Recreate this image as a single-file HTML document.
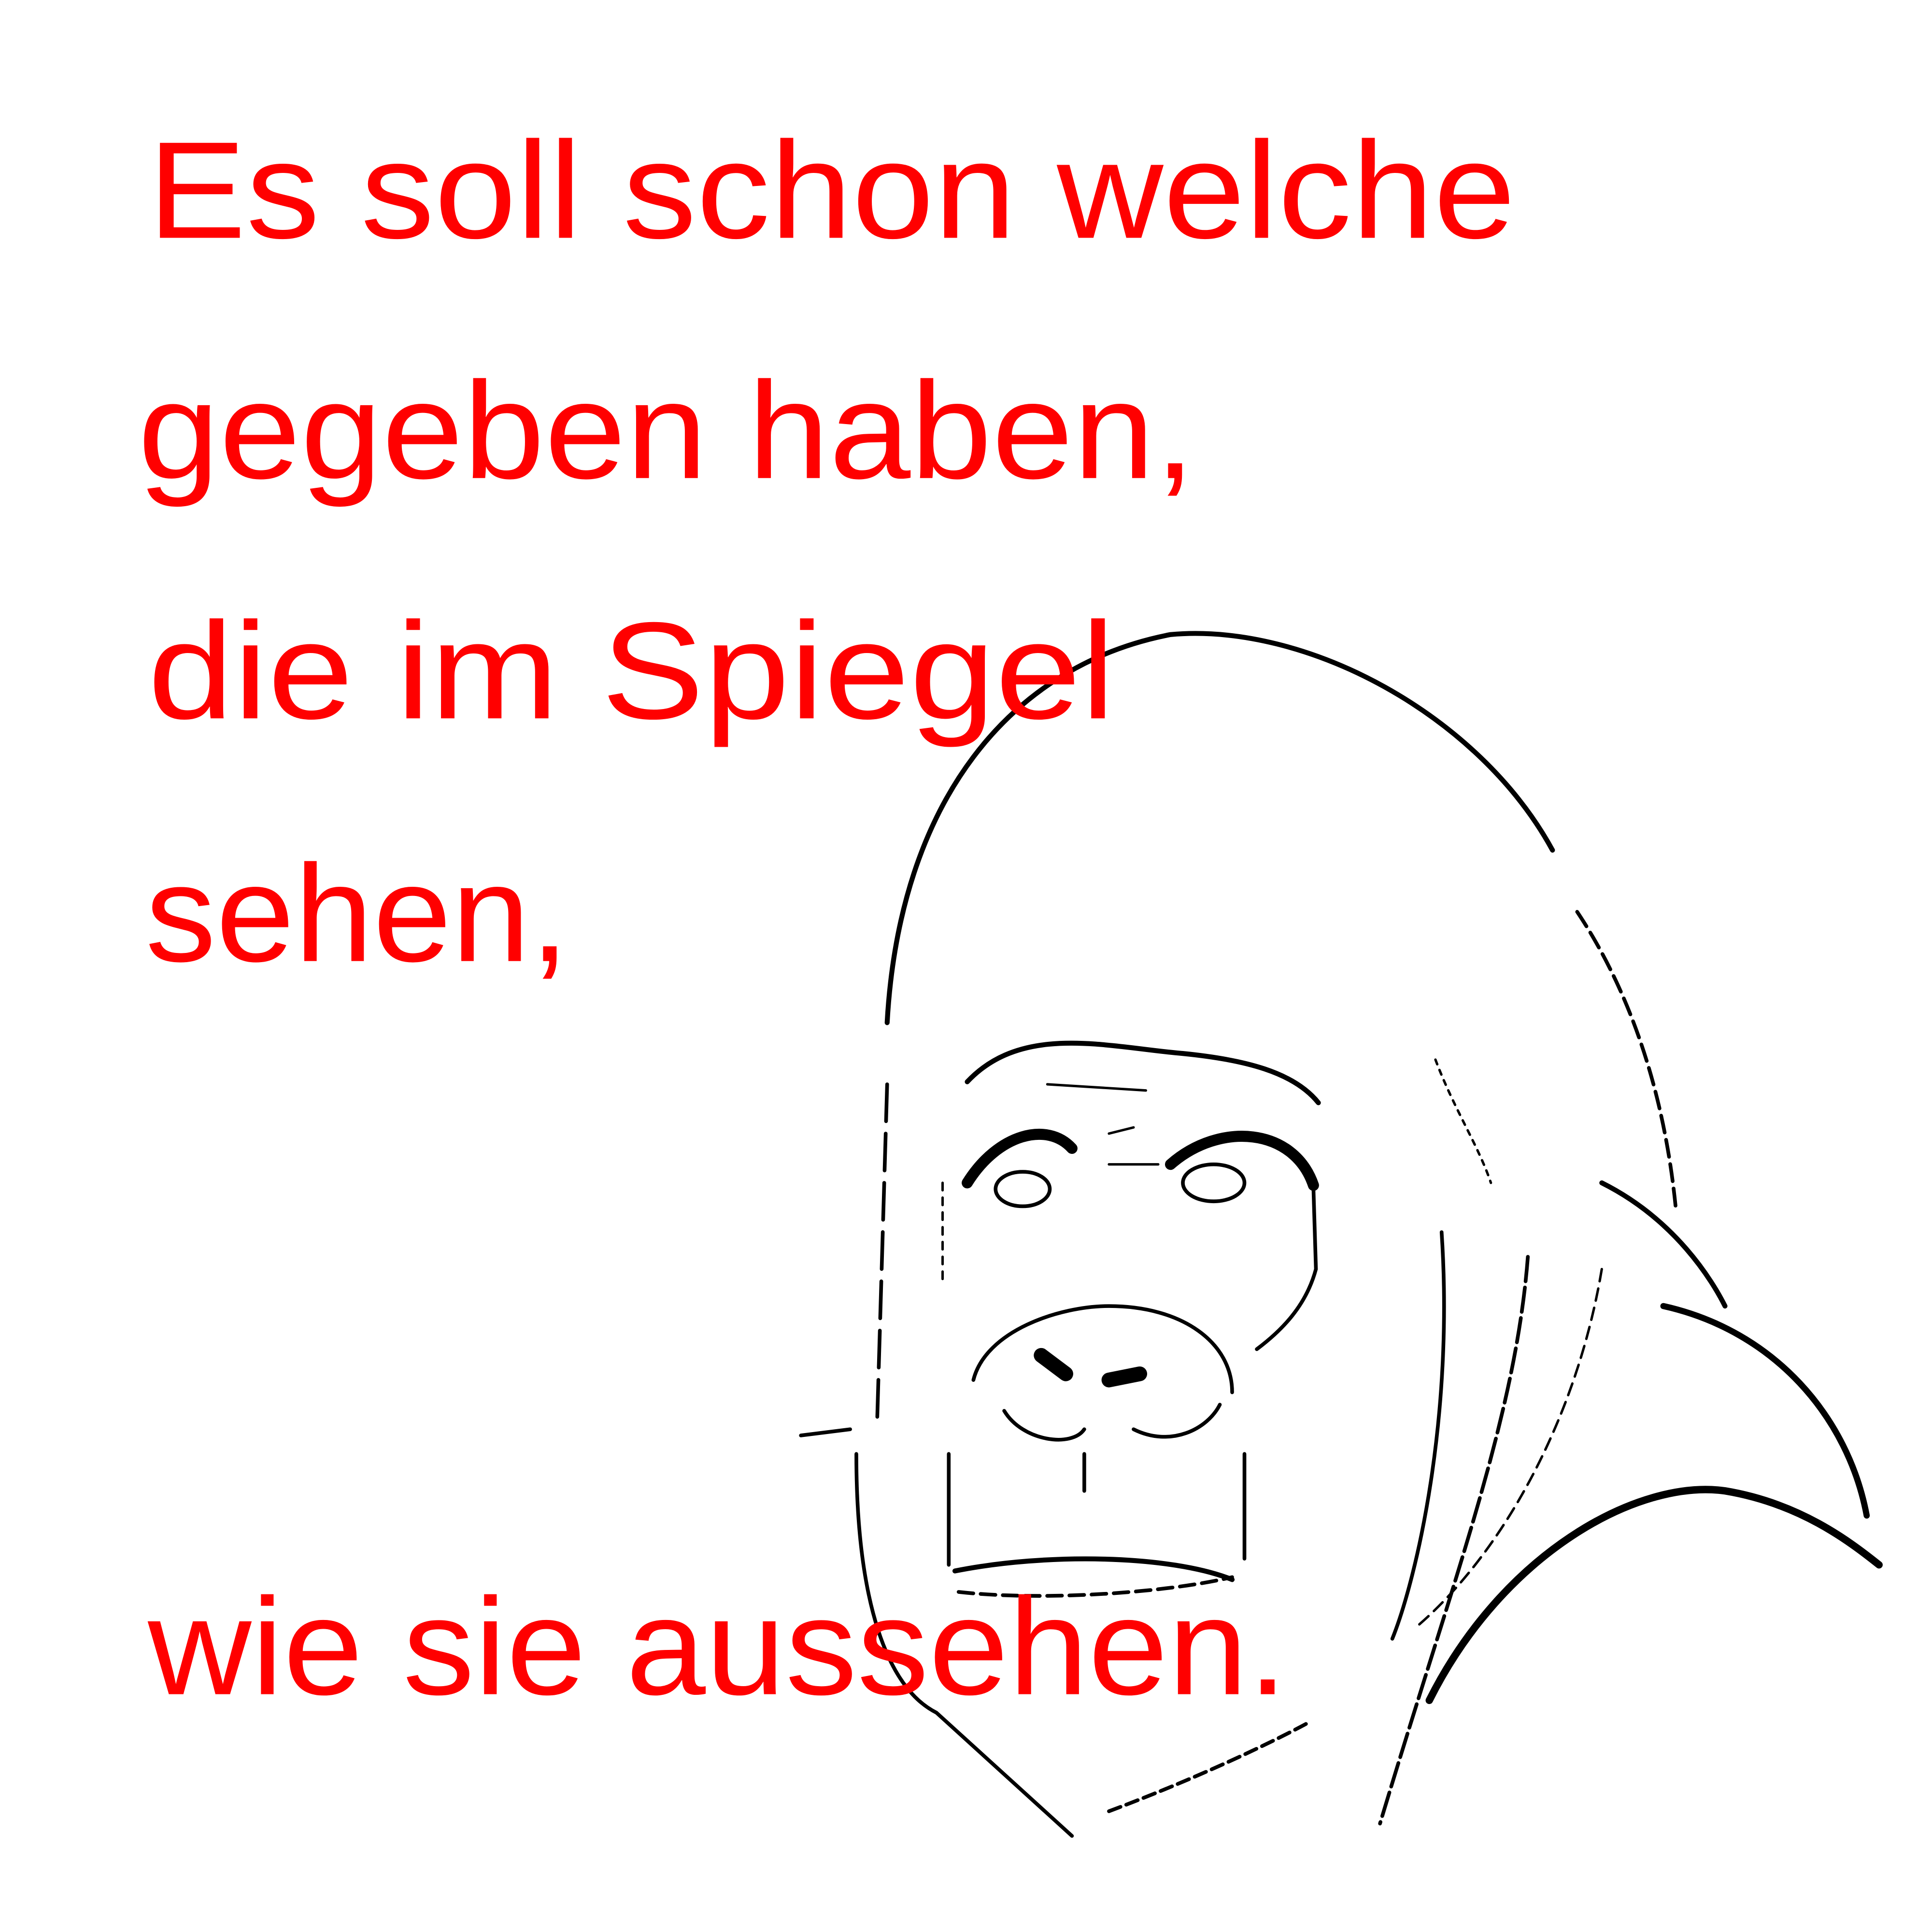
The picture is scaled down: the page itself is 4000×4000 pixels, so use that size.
<!DOCTYPE html>
<html><head><meta charset="utf-8"><style>
html,body{margin:0;padding:0;background:#fff;width:4000px;height:4000px;overflow:hidden}
svg{display:block}
</style></head><body>
<svg width="4000" height="4000" viewBox="0 0 1568 1568" xmlns="http://www.w3.org/2000/svg">
<g fill="none" stroke="#000" stroke-linecap="round">
<path d="M720,830 C730,650 820,540 950,515 C1060,505 1200,580 1260,690" stroke-width="4"/>
<path d="M1280,740 C1320,800 1350,880 1360,980" stroke-width="3" stroke-dasharray="14 6"/>
<path d="M785,878 C830,830 900,850 960,855 C1010,860 1050,870 1070,895" stroke-width="4"/>
<path d="M720,880 L712,1150" stroke-width="3" stroke-dasharray="30 10"/>
<path d="M695,1180 C695,1300 720,1370 760,1390 L870,1490" stroke-width="3"/>
<path d="M900,1470 C980,1440 1040,1410 1062,1398" stroke-width="3" stroke-dasharray="10 5"/>
<path d="M785,960 C810,920 850,910 870,932" stroke-width="9"/>
<path d="M950,945 C990,910 1050,915 1066,962" stroke-width="9"/>
<ellipse cx="830" cy="965" rx="22" ry="14" stroke-width="3"/>
<ellipse cx="985" cy="960" rx="25" ry="15" stroke-width="3"/>
<path d="M1066,965 L1068,1030 C1060,1060 1040,1080 1020,1095" stroke-width="3"/>
<path d="M765,960 L765,1040" stroke-width="2" stroke-dasharray="6 6"/>
<path d="M790,1120 C800,1080 860,1060 900,1060 C960,1060 1000,1090 1000,1130" stroke-width="3"/>
<path d="M845,1100 l20,15 M900,1120 l25,-5" stroke-width="12"/>
<path d="M815,1145 C830,1170 870,1175 880,1160 M920,1160 C950,1175 980,1160 990,1140" stroke-width="3"/>
<path d="M880,1180 L880,1210" stroke-width="3"/>
<path d="M770,1180 L770,1270 M1010,1180 L1010,1265" stroke-width="3"/>
<path d="M775,1275 C850,1260 950,1262 1000,1282" stroke-width="4"/>
<path d="M778,1292 C850,1300 950,1292 1000,1280" stroke-width="3" stroke-dasharray="12 6"/>
<path d="M650,1165 L690,1160" stroke-width="3"/>
<path d="M1300,960 C1360,990 1390,1040 1400,1060" stroke-width="4"/>
<path d="M1350,1060 C1440,1080 1500,1150 1515,1230" stroke-width="5"/>
<path d="M1160,1380 C1220,1260 1330,1200 1400,1210 C1460,1220 1500,1250 1525,1270" stroke-width="6"/>
<path d="M1170,1000 C1180,1150 1150,1280 1130,1330" stroke-width="3"/>
<path d="M1240,1020 C1230,1150 1180,1280 1120,1480" stroke-width="3" stroke-dasharray="20 5"/>
<path d="M1300,1030 C1280,1150 1220,1260 1150,1320" stroke-width="2" stroke-dasharray="10 6"/>
<path d="M1165,860 C1180,900 1200,930 1210,960" stroke-width="2" stroke-dasharray="4 5"/>
<path d="M850,880 L930,885 M900,920 L920,915 M900,945 L940,945" stroke-width="2"/>
</g>
<g fill="#ff0000" font-family="Liberation Sans, sans-serif" font-size="112">
<text x="120" y="193" textLength="1110" lengthAdjust="spacingAndGlyphs">Es soll schon welche</text>
<text x="112" y="388" textLength="858" lengthAdjust="spacingAndGlyphs">gegeben haben,</text>
<text x="120" y="583" textLength="785" lengthAdjust="spacingAndGlyphs">die im Spiegel</text>
<text x="118" y="780" textLength="344" lengthAdjust="spacingAndGlyphs">sehen,</text>
<text x="120" y="1375" textLength="925" lengthAdjust="spacingAndGlyphs">wie sie aussehen.</text>
</g>
</svg>
</body></html>
